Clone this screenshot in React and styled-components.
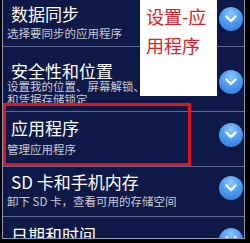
import React from 'react'
import styled, { createGlobalStyle } from 'styled-components'

const GlobalStyle = createGlobalStyle`
    html, body {
        margin: 0;
        padding: 0;
        background: #000;
    }
    body {
        font-family: "Noto Sans CJK SC", "Noto Sans", sans-serif;
    }
`

const Frame = styled.div`
    position: relative;
    width: 250px;
    height: 243px;
    box-sizing: border-box;
    padding: 0 5px 4px 2px;
    background: #000;
    overflow: hidden;
`

const Screen = styled.div`
    height: 100%;
    box-sizing: border-box;
    border: 1px solid #8e98b8;
    border-top: none;
    background: #0e1947;
    overflow: hidden;
`

const Row = styled.div`
    display: flex;
    align-items: flex-start;
    height: ${({ height }) => height}px;
    padding: ${({ pt }) => pt}px 1px 0 4px;
    border-bottom: 1px solid #5f6890;
    box-sizing: border-box;
`

const Texts = styled.div`
    flex: 1;
    min-width: 0;
    display: flex;
    flex-direction: column;
`

const Title = styled.div`
    color: #ffffff;
    font-size: 17px;
    line-height: ${({ lh }) => lh}px;
    white-space: nowrap;
    margin: 0 0 ${({ mb }) => mb}px 4px;
`

const Summary = styled.div`
    color: #c9cbd6;
    font-size: 11.5px;
    line-height: 13px;
    white-space: nowrap;
`

const Toggle = styled.div`
    flex: none;
    width: 24px;
    height: 24px;
    border-radius: 50%;
    margin-top: ${({ top }) => top}px;
    display: flex;
    align-items: center;
    justify-content: center;
    background: radial-gradient(circle at 50% 28%, #8cc8ff 0%, #4e9cf0 45%, #2b74d6 100%);
    box-shadow: 0 0 1px rgba(0, 0, 0, 0.5);
`

const Highlight = styled.div`
    position: absolute;
    left: 3px;
    top: 103px;
    width: 188px;
    height: 63px;
    box-sizing: border-box;
    border: 3px solid #e3141f;
`

const Callout = styled.div`
    position: absolute;
    left: 140px;
    top: 0;
    width: 77px;
    height: 96px;
    box-sizing: border-box;
    padding: 2px 0 0 6px;
    background: #ffffff;
    color: #e3202a;
    font-size: 18px;
    line-height: 29px;
`

const Chevron = () => (
    <svg width="12" height="8" viewBox="0 0 12 8">
        <polyline points="1.5,1.5 6,6 10.5,1.5" fill="none" stroke="#fff" strokeWidth="2.4" strokeLinecap="round" strokeLinejoin="round" />
    </svg>
)

// pt: top padding of the texts, top: circle offset from the row top
const items = [
    { title: '数据同步', summary: ['选择要同步的应用程序'], height: 47, pt: 4, lh: 20, mb: 3, top: 7 },
    { title: '安全性和位置', summary: ['设置我的位置、屏幕解锁、SIM 卡锁定', '和凭据存储锁定'], height: 65, pt: 15, lh: 17, mb: 1, top: 23 },
    { title: '应用程序', summary: ['管理应用程序'], height: 55, pt: 6, lh: 20, mb: 5, top: 11 },
    { title: 'SD 卡和手机内存', summary: ['卸下 SD 卡，查看可用的存储空间'], height: 50, pt: 5, lh: 20, mb: 3, top: 9 },
    { title: '日期和时间', summary: ['设置日期、时间、时区和格式'], height: 50, pt: 8, lh: 20, mb: 3, top: 11 },
]

const App = () => (
    <Frame>
        <GlobalStyle />
        <Screen>
            {items.map((item) => (
                <Row key={item.title} height={item.height} pt={item.pt}>
                    <Texts>
                        <Title lh={item.lh} mb={item.mb}>{item.title}</Title>
                        {item.summary.map((line) => (
                            <Summary key={line}>{line}</Summary>
                        ))}
                    </Texts>
                    <Toggle top={item.top - item.pt}>
                        <Chevron />
                    </Toggle>
                </Row>
            ))}
        </Screen>
        <Highlight />
        <Callout>
            设置-应
            <br />
            用程序
        </Callout>
    </Frame>
)

export default App
